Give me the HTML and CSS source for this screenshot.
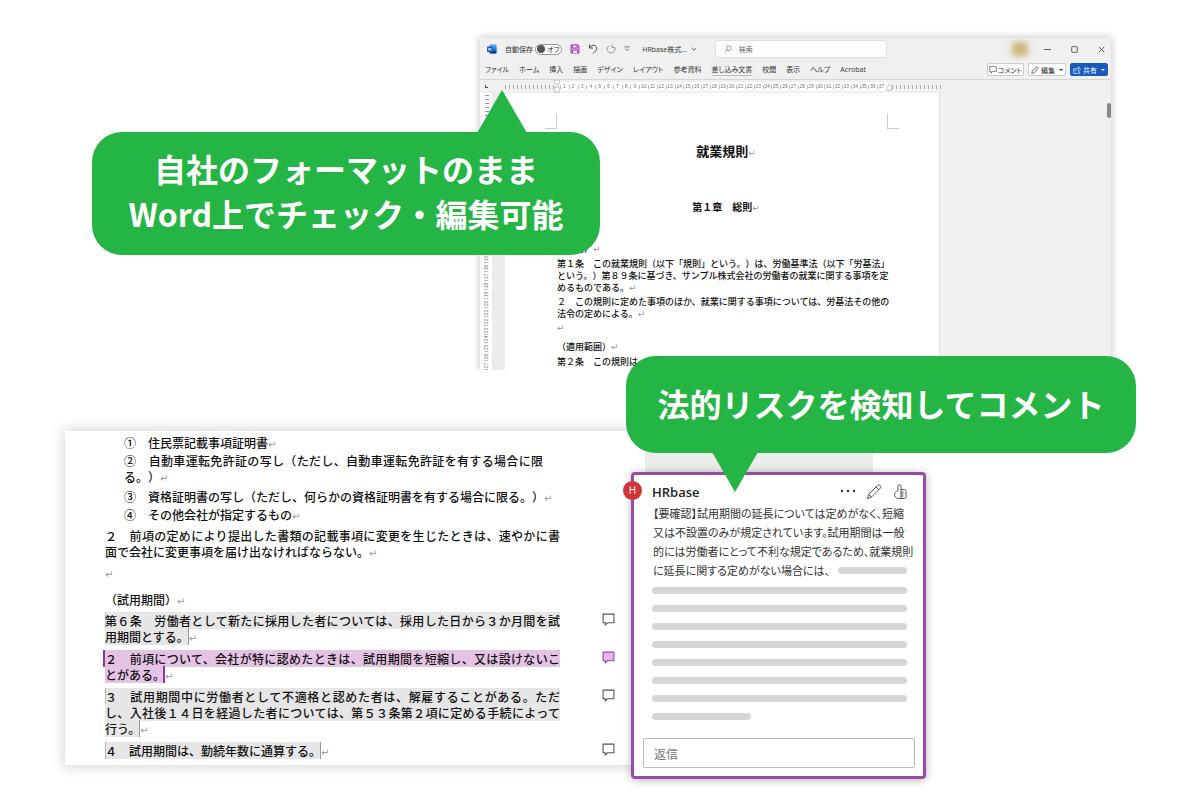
FILE: index.html
```html
<!DOCTYPE html>
<html lang="ja">
<head>
<meta charset="utf-8">
<meta name="viewport" content="width=device-width, initial-scale=1">
<title>HRbase</title>
<link rel="stylesheet" href="styles.css">
</head>
<body>
<main class="scene">
  <section class="stage">
    <div class="window">
      <header class="titlebar">
        <svg class="logo" viewBox="0 0 20 20" aria-hidden="true"><rect x="5" y="1" width="14" height="18" rx="2" fill="#41a5ee"/><path d="M5 7h14v6H5z" fill="#2b7cd3"/><path d="M5 13h14v4a2 2 0 0 1-2 2H7a2 2 0 0 1-2-2z" fill="#103f91"/><rect x="0" y="5" width="11" height="11" rx="1.500" fill="#185abd"/><path d="M2.500 8l1.300 5 1.700-5 1.700 5 1.300-5" fill="none" stroke="#fff" stroke-width="1.200"/></svg>
        <span class="autosave">自動保存</span>
        <button class="toggle" type="button"><span class="knob"></span>オフ</button>
        <button class="tool save" type="button" aria-label="保存"><svg viewBox="0 0 20 20"><path d="M2 2h14l2 2v14H2z" fill="#d9a7e0" stroke="#a33bb0" stroke-width="2"/><path d="M5 2h9v6H5zM5 18v-6h10v6" fill="#f6e6f8" stroke="#a33bb0" stroke-width="1.800"/></svg></button>
        <button class="tool" type="button" aria-label="元に戻す"><svg viewBox="0 0 20 20"><path d="M3 1v7h7M3 8c3-5 8-7 12-4s3 8-1 11l-4 4" fill="none" stroke="#444" stroke-width="2"/></svg></button>
        <button class="tool" type="button" aria-label="やり直し"><svg viewBox="0 0 20 20"><path d="M12 1v6h6M6 3a8 8 0 1 0 11 3" fill="none" stroke="#999" stroke-width="2"/></svg></button>
        <button class="tool more" type="button" aria-label="クイックアクセス"><svg viewBox="0 0 10 10"><path d="M1 1.500h8M2 4.500l3 3 3-3" fill="none" stroke="#555" stroke-width="1.400"/></svg></button>
        <button class="filename" type="button">HRbase株式…<svg viewBox="0 0 10 10" aria-hidden="true"><path d="M1 3l4 4 4-4" fill="none" stroke="#444" stroke-width="1.400"/></svg></button>
        <label class="search"><svg viewBox="0 0 20 20" aria-hidden="true"><circle cx="12" cy="8" r="6" fill="none" stroke="#777" stroke-width="1.800"/><path d="M8 12l-6 6" stroke="#777" stroke-width="1.800"/></svg><input type="text" placeholder="検索" aria-label="検索"></label>
        <span class="account"></span>
        <div class="controls">
          <button type="button" aria-label="最小化"><svg viewBox="0 0 10 10"><path d="M0 5h10"/></svg></button>
          <button type="button" aria-label="最大化"><svg viewBox="0 0 10 10"><rect x="1" y="1" width="8" height="8" rx="1"/></svg></button>
          <button type="button" aria-label="閉じる"><svg viewBox="0 0 10 10"><path d="M1 1l8 8M9 1L1 9"/></svg></button>
        </div>
      </header>
      <div class="ribbon">
        <nav class="tabs">
          <a href="#">ファイル</a><a href="#">ホーム</a><a href="#">挿入</a><a href="#">描画</a><a href="#">デザイン</a><a href="#">レイアウト</a><a href="#">参考資料</a><a href="#" class="current">差し込み文書</a><a href="#">校閲</a><a href="#">表示</a><a href="#">ヘルプ</a><a href="#">Acrobat</a>
        </nav>
        <div class="actions">
          <button type="button"><svg viewBox="0 0 12 12" aria-hidden="true"><path d="M1 1h10v7H5l-2 3V8H1z" fill="none" stroke="#444"/></svg>コメント</button>
          <button type="button" class="edit"><svg viewBox="0 0 12 12" aria-hidden="true"><path d="M1 11l1-4 7-6 2 2-6 7z" fill="none" stroke="#333"/></svg>編集<i class="caret"></i></button>
          <button type="button" class="share"><svg viewBox="0 0 12 12" aria-hidden="true"><path d="M4 4H1v7h9V8M3 8c0-3 2-4 5-4V1l3 4-3 3V6" fill="none" stroke="#fff"/></svg>共有<i class="caret"></i></button>
        </div>
      </div>
      <div class="hruler" aria-hidden="true">
        <span class="tabstop"></span><span class="ticks"></span>
        <svg class="indent" viewBox="0 0 6 14"><path d="M0 0h6v2L3 5 0 2zM3 7l3 2v4H0V9z" fill="#fff" stroke="#999" stroke-width=".700"/></svg>
        <div class="hnums"><i>1</i><i>2</i><i>3</i><i>4</i><i>5</i><i>6</i><i>7</i><i>8</i><i>9</i><i>10</i><i>11</i><i>12</i><i>13</i><i>14</i><i>15</i><i>16</i><i>17</i><i>18</i><i>19</i><i>20</i><i>21</i><i>22</i><i>23</i><i>24</i><i>25</i><i>26</i><i>27</i><i>28</i><i>29</i><i>30</i><i>31</i><i>32</i><i>33</i><i>34</i><i>35</i><i>36</i><i>37</i></div>
        <svg class="indent right" viewBox="0 0 6 14"><path d="M3 5l3 3v3H0V8z" fill="#fff" stroke="#999" stroke-width=".700"/></svg>
        <span class="ticks after"></span>
      </div>
      <div class="workspace">
        <div class="vruler" aria-hidden="true"><i>1</i><i>2</i><i>3</i><i>4</i><i>5</i><i>6</i><i>7</i><i>8</i><i>9</i><i>10</i><i>11</i><i>12</i><i>13</i><i>14</i><i>15</i><i>16</i><i>17</i><i>18</i><i>19</i><i>20</i><i>21</i><i>22</i><i>23</i><i>24</i><i>25</i><i>26</i><i>27</i></div>
        <article class="page">
          <div class="crops"><span></span><span></span></div>
          <h1>就業規則<b class="ret">↵</b></h1>
          <h2>第１章　総則<b class="ret">↵</b></h2>
          <p class="head">（目的）<b class="ret">↵</b></p>
          <p>第１条　この就業規則（以下「規則」という。）は、労働基準法（以下「労基法」<br>という。）第８９条に基づき、サンプル株式会社の労働者の就業に関する事項を定<br>めるものである。<b class="ret">↵</b></p>
          <p>２　この規則に定めた事項のほか、就業に関する事項については、労基法その他の<br>法令の定めによる。<b class="ret">↵</b></p>
          <p><b class="ret">↵</b></p>
          <p class="scope">（適用範囲）<b class="ret">↵</b></p>
          <p>第２条　この規則は、</p>
        </article>
        <div class="margin"><span class="thumb"></span></div>
      </div>
    </div>
    <p class="callout up">自社のフォーマットのまま<br>Word上でチェック・編集可能</p>
    <p class="callout down">法的リスクを検知してコメント</p>
  </section>

  <section class="review">
    <article class="excerpt">
      <p class="item">①　住民票記載事項証明書<b class="ret">↵</b></p>
      <p class="item wrapped">②　自動車運転免許証の写し（ただし、自動車運転免許証を有する場合に限る。）<b class="ret">↵</b></p>
      <p class="item spaced">③　資格証明書の写し（ただし、何らかの資格証明書を有する場合に限る。）<b class="ret">↵</b></p>
      <p class="item">④　その他会社が指定するもの<b class="ret">↵</b></p>
      <p class="clause">２　前項の定めにより提出した書類の記載事項に変更を生じたときは、速やかに書面で会社に変更事項を届け出なければならない。<b class="ret">↵</b></p>
      <p class="clause"><b class="ret">↵</b></p>
      <p class="clause title">（試用期間）<b class="ret">↵</b></p>
      <div class="noted"><p><mark>第６条　労働者として新たに採用した者については、採用した日から３か月間を試用期間とする。</mark><b class="ret">↵</b></p><button type="button" aria-label="コメント"><svg viewBox="0 0 12 12"><path d="M1 1h10v8H5l-2 2V9H1z"/></svg></button></div>
      <div class="noted active"><p><mark>２　前項について、会社が特に認めたときは、試用期間を短縮し、又は設けないことがある。</mark><b class="ret">↵</b></p><button type="button" aria-label="コメント"><svg viewBox="0 0 12 12"><path d="M1 1h10v8H5l-2 2V9H1z"/></svg></button></div>
      <div class="noted"><p><mark>３　試用期間中に労働者として不適格と認めた者は、解雇することがある。ただし、入社後１４日を経過した者については、第５３条第２項に定める手続によって<span class="keep">行う。</span></mark><b class="ret">↵</b></p><button type="button" aria-label="コメント"><svg viewBox="0 0 12 12"><path d="M1 1h10v8H5l-2 2V9H1z"/></svg></button></div>
      <div class="noted"><p><mark>４　試用期間は、勤続年数に通算する。</mark><b class="ret">↵</b></p><button type="button" aria-label="コメント"><svg viewBox="0 0 12 12"><path d="M1 1h10v8H5l-2 2V9H1z"/></svg></button></div>
    </article>
    <aside class="thread">
      <div class="card">
        <span class="avatar">H</span>
        <header class="author">
          <strong>HRbase</strong>
          <button type="button" aria-label="その他"><svg viewBox="0 0 16 16"><g fill="#333"><circle cx="2" cy="7" r="1.200"/><circle cx="8" cy="7" r="1.200"/><circle cx="14" cy="7" r="1.200"/></g></svg></button>
          <button type="button" aria-label="編集"><svg viewBox="0 0 16 16"><path d="M1.500 14.500l1-4L11.500 1.500c2-1.500 4 .5 3 2.500L5.500 13zM10 3l3 3M2.500 10.500l3 2.500" fill="none" stroke="#555"/></svg></button>
          <button type="button" aria-label="いいね"><svg viewBox="0 0 16 16"><path d="M6 6.500V2C6 .2 9 .2 9 2v3.500h3.500c1.300 0 1.500 1 1.500 2v5c0 1.200-.7 2-2 2H6.500c-2.500 0-4-2-4-4.200C2.500 8.500 4 7.500 6 6.500zM9 5.500v9M9 8h2.500M9 10h2.500M9 12h2.500" fill="none" stroke="#555"/></svg></button>
        </header>
        <div class="message">【要確認】試用期間の延長については定めがなく、短縮<br>又は不設置のみが規定されています。試用期間は一般<br>的には労働者にとって不利な規定であるため、就業規則<div class="lastline">に延長に関する定めがない場合には、<span class="bar"></span></div></div>
        <div class="bars"><span class="bar"></span><span class="bar"></span><span class="bar"></span><span class="bar"></span><span class="bar"></span><span class="bar"></span><span class="bar"></span><span class="bar short"></span></div>
        <input class="reply" type="text" placeholder="返信" aria-label="返信">
      </div>
    </aside>
  </section>
</main>
</body>
</html>
```
FILE: styles.css
```css
* { box-sizing: border-box; }
body { margin: 0; background: #fff; color: #222; font-family: "Noto Sans CJK JP", sans-serif; text-spacing-trim: space-all; }
p, h1, h2 { margin: 0; }
i { font-style: normal; }
button { margin: 0; padding: 0; border: 0; background: none; color: inherit; font: inherit; }
svg { display: block; flex: none; }
.scene { padding-top: 38px; overflow: hidden; }
.ret { color: #999; font: 400 9px "DejaVu Sans", sans-serif; line-height: 1; }

/* Editor window */
.stage { position: relative; z-index: 2; margin-left: 40%; width: 631px; }
.window { background: #f0f0f0; box-shadow: 0 0 8px 1px rgba(0, 0, 0, .2); clip-path: inset(-12px -12px 0 -12px); font-size: 7px; color: #333; }
.titlebar { display: flex; align-items: center; height: 22px; padding: 0 6px 0 7px; }
.logo { width: 10px; height: 10px; }
.autosave { margin: 0 2px 0 8px; }
.toggle { display: flex; align-items: center; gap: 2px; height: 11px; padding: 0 2px 0 1px; border: 1px solid #999; border-radius: 6px; background: #fff; font-feature-settings: "palt"; }
.knob { width: 8px; height: 8px; border-radius: 50%; background: #555; }
.tool { margin-left: 8px; }
.tool svg { width: 10px; height: 10px; }
.tool.more svg { width: 6px; height: 6px; }
.filename { display: flex; align-items: center; gap: 4px; margin-left: 12px; font-family: "Open Sans", "Noto Sans CJK JP", sans-serif; }
.filename svg { width: 6px; height: 6px; }
.search { display: flex; align-items: center; gap: 7px; width: 172px; height: 18px; margin-left: 18px; padding: 0 8px; border: 1px solid #ddd; border-radius: 2px; background: #fdfdfd; }
.search svg { width: 8px; height: 8px; }
.search input { flex: 1; min-width: 0; padding: 0; border: 0; outline: 0; background: none; font: inherit; }
.search input::placeholder { color: #666; opacity: 1; }
.account { width: 16px; height: 14px; margin-left: auto; background: #c9b577; filter: blur(3px); }
.controls { display: flex; gap: 20px; margin-left: 16px; }
.controls svg { width: 7px; height: 7px; fill: none; stroke: #444; stroke-width: 1.2; }
.ribbon { display: flex; align-items: center; justify-content: space-between; height: 20px; padding: 0 3px 0 5px; border-bottom: 1px solid #d4d4d4; }
.tabs { display: flex; justify-content: space-between; width: 381px; padding-top: 1px; line-height: 10px; font-feature-settings: "palt"; font-family: "Open Sans", "Noto Sans CJK JP", sans-serif; }
.tabs a { color: #333; text-decoration: none; white-space: nowrap; }
.tabs .current { box-shadow: 0 1px #bbb; }
.actions { display: flex; gap: 4px; }
.actions button { display: flex; align-items: center; justify-content: center; gap: 1px; height: 13px; padding: 0 1px; border: 1px solid #ccc; border-radius: 2px; background: #fff; font-feature-settings: "palt"; white-space: nowrap; }
.actions .edit, .actions .share { gap: 2px; padding: 0 2px; }
.actions svg { width: 8px; height: 8px; }
.actions .share { border-color: #185abd; background: #185abd; color: #fff; }
.caret { margin-left: 2px; border: 2px solid transparent; border-top-color: currentColor; border-bottom: 0; }

.hruler { display: flex; align-items: center; height: 13px; font: 5px "Liberation Sans", sans-serif; color: #777; background: linear-gradient(#fff, #fff) 80px 50% / 328px 9px no-repeat; }
.tabstop { width: 3px; height: 3px; margin: 0 17px 0 5px; border: solid #444; border-width: 0 0 1px 1px; }
.ticks { width: 49px; height: 4px; background: repeating-linear-gradient(90deg, #aaa 0 1px, transparent 1px 4px); }
.indent { width: 6px; height: 13px; }
.hnums { display: grid; grid-template-columns: repeat(37, 1fr); width: 326px; }
.hnums i { text-align: center; line-height: 5px; background: linear-gradient(#bbb, #bbb) 0 50% / 1px 4px no-repeat; }
.workspace { display: flex; }
.vruler { display: grid; grid-template-rows: repeat(27, 1fr); flex: none; width: 25px; padding-top: 37px; font: 5px "Liberation Sans", sans-serif; color: #777;
  background: repeating-linear-gradient(#999 0 1px, transparent 1px 4px) 5px 2px / 4px 35px no-repeat, linear-gradient(90deg, #fff 12px, #ececec 12px); }
.vruler i { display: grid; place-items: center; width: 9px; margin-left: 2px; line-height: 5px; transform: rotate(-90deg); background: linear-gradient(#bbb, #bbb) 0 50% / 1px 4px no-repeat; }
.page { flex: none; width: 435px; height: 277px; padding: 21px 40px 0; overflow: hidden; background: #fff; border-right: 1px solid #e0e0e0; color: #111; font-weight: 500; font-size: 9px; line-height: 12px; }
.page p { padding-left: 12px; margin-bottom: 2px; white-space: nowrap; }
.crops { display: flex; justify-content: space-between; }
.crops span { width: 12px; height: 15px; border: solid #ccc; border-width: 0 1px 1px 0; }
.crops span + span { border-width: 0 0 1px 1px; }
.page h1, .page h2 { padding-left: 8px; text-align: center; }
.page h1 { margin-top: 12px; font-size: 13px; line-height: 20px; }
.page h2 { margin-top: 38px; font-size: 10px; line-height: 16px; }
.page .head { margin: 28px 0 3px; }
.page .scope { margin-top: 7px; margin-bottom: 3px; }
.margin { display: flex; justify-content: flex-end; flex: 1; }
.thumb { width: 4px; height: 15px; margin-top: 10px; border-radius: 2px; background: #888; }

/* Speech bubbles */
.callout { position: absolute; border-radius: 30px; background: #24b545; color: #fff; font-size: 32px; font-weight: 700; line-height: 45px; text-align: center; white-space: nowrap; }
.callout::after { content: ""; position: absolute; background: #24b545; }
.callout.up { left: -388px; top: 94px; width: 508px; padding: 14px 0 19px; }
.callout.up::after { left: 385px; top: -42px; width: 50px; height: 43px; clip-path: polygon(50% 0, 100% 100%, 0 100%); }
.callout.down { left: 146px; top: 318px; width: 510px; padding: 25px 0 27px; }
.callout.down::after { left: 86px; top: 96px; width: 46px; height: 40px; clip-path: polygon(0 0, 100% 0, 50% 100%); }

/* Reviewed excerpt */
.review { display: flex; align-items: flex-start; margin: 61px 0 0 65px; padding-bottom: 22px; }
.excerpt { flex: none; width: 580px; height: 334px; padding: 4px 0 0 40px; overflow: hidden; background: #fff; box-shadow: 0 0 12px 2px rgba(0, 0, 0, .16); color: #111; font-size: 12px; font-weight: 500; line-height: 16px; }
.excerpt p { width: 455px; text-align: justify; }
.excerpt .ret { font-size: 10px; }
.excerpt .item { padding-left: 19px; margin-bottom: 2px; white-space: nowrap; }
.excerpt .wrapped { width: 419px; margin-left: 19px; padding: 0; white-space: normal; }
.excerpt .item.spaced { margin-top: 4px; }
.excerpt .clause { margin-top: 5px; }
.excerpt .title { margin: 11px 0 5px; }
.noted { display: flex; justify-content: space-between; align-items: flex-start; padding-right: 30px; margin-bottom: 6px; }
.noted svg { width: 13px; height: 13px; fill: #fff; stroke: #555; }
.keep { white-space: nowrap; }
mark { background: #e6e6e6; color: inherit; box-shadow: inset 1px 0 #bbb, inset -1px 0 #999; }
.active mark { background: #e5c3e5; box-shadow: -2px 0 #8a3a9a, inset -2px 0 #8a3a9a; }
.active svg { fill: #e6b5ec; stroke: #9a4aa8; }

/* Comment card */
.thread { position: relative; width: 295px; margin: 41px 0 0 -14px; }
.thread::before { content: ""; position: absolute; left: 14px; top: -24px; width: 228px; height: 30px; background: #ececec; }
.card { position: relative; padding: 8px 8px 8px 9px; border: 3px solid #9a4aa8; border-radius: 4px; background: #fff; box-shadow: 0 1px 9px rgba(0, 0, 0, .3); }
.avatar { position: absolute; left: -11px; top: 6px; width: 19px; height: 19px; border-radius: 50%; background: #d13438; color: #fff; font: 10px "Open Sans", sans-serif; line-height: 19px; text-align: center; }
.author { display: flex; align-items: center; gap: 10px; height: 18px; padding: 0 7px 0 9px; font-family: "Open Sans", sans-serif; font-size: 13px; line-height: 18px; }
.author strong { margin-right: auto; font-weight: 600; }
.author svg { width: 16px; height: 16px; }
.message { margin-top: 3px; padding: 0 0 0 10px; color: #333; font-size: 11px; line-height: 19px; font-feature-settings: "palt"; white-space: nowrap; }
.bar { display: block; height: 7px; border-radius: 4px; background: #d6d6d6; }
.lastline { display: flex; align-items: center; gap: 8px; padding-right: 8px; }
.lastline .bar { flex: 1; }
.bars { display: grid; gap: 11px; padding: 7px 8px 0 9px; }
.bar.short { width: 99px; }
.reply { display: block; width: 100%; height: 30px; margin-top: 18px; padding: 0 10px; border: 1px solid #bbb; border-radius: 2px; background: #fff; font: 12px "Noto Sans CJK JP", sans-serif; }
.reply::placeholder { color: #777; opacity: 1; }
```
